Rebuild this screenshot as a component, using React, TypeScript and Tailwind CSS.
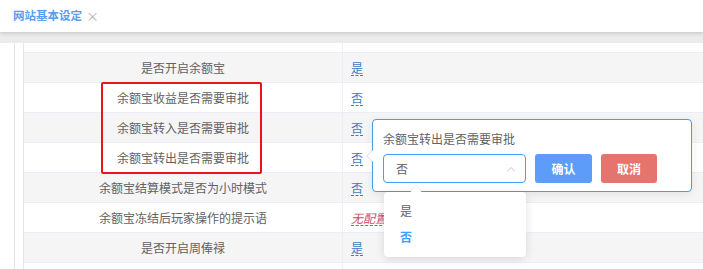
import React from 'react';

const rows: { label: string; value: string; kind: 'link' | 'none' }[] = [
  { label: '是否开启余额宝', value: '是', kind: 'link' },
  { label: '余额宝收益是否需要审批', value: '否', kind: 'link' },
  { label: '余额宝转入是否需要审批', value: '否', kind: 'link' },
  { label: '余额宝转出是否需要审批', value: '否', kind: 'link' },
  { label: '余额宝结算模式是否为小时模式', value: '否', kind: 'link' },
  { label: '余额宝冻结后玩家操作的提示语', value: '无配置', kind: 'none' },
  { label: '是否开启周俸禄', value: '是', kind: 'link' },
  { label: '', value: '', kind: 'link' },
];

export default function App() {
  return (
    <div className="relative h-[269px] w-[703px] overflow-hidden bg-white text-[12px] text-[#606266] [font-family:'Noto_Sans_CJK_SC','Noto_Sans',sans-serif]">
      <div className="relative z-10 flex h-[32px] items-center gap-[4px] bg-white pl-[13px] shadow-[0_1px_4px_rgba(0,0,0,0.18)]">
        <span className="text-[11.5px] font-bold text-[#5b9cf0]">网站基本设定</span>
        <span className="text-[13px] text-[#b4b4b4]">×</span>
      </div>
      <div className="h-[11px] bg-[#ebebeb]" />

      <div className="flex">
        <div className="w-[14px]" />
        <div className="w-[9px] border-l border-[#e6e6e6]" />
        <div className="flex-1 border-l border-[#e6e6e6]">
          <div className="flex h-[9px]">
            <div className="w-[319px] border-r border-[#ebeef5]" />
          </div>
          {rows.map((r, i) => (
            <div key={i} className={`flex h-[30px] border-t border-[#ebeef5] ${i % 2 === 0 ? 'bg-[#f5f5f5]' : 'bg-white'}`}>
              <div className="flex w-[319px] items-center justify-center border-r border-[#ebeef5]">{r.label}</div>
              <div className="flex items-center pl-[8px]">
                {r.value && (
                  <span
                    className={
                      r.kind === 'link'
                        ? 'border-b border-dashed border-[#3f7bc4] leading-[15px] text-[#3f7bc4]'
                        : 'border-b border-dashed border-[#d0486a] leading-[15px] italic text-[#d0486a]'
                    }
                  >
                    {r.value}
                  </span>
                )}
              </div>
            </div>
          ))}
        </div>
      </div>

      {/* highlight box */}
      <div className="absolute left-[101px] top-[82px] h-[92px] w-[161px] rounded-[2px] border-[2.5px] border-[#e8151b]" />

      {/* popover */}
      <div className="absolute left-[372px] top-[119px] h-[73px] w-[320px] rounded-[4px] border border-[#4a9de0] bg-white px-[10px] pt-[10px] shadow-[0_2px_8px_rgba(0,0,0,0.08)]">
        <div className="absolute left-[-5px] top-[32px] h-[8px] w-[8px] rotate-45 border-b border-l border-[#e4e7ed] bg-white" />
        <div className="leading-[18px]">余额宝转出是否需要审批</div>
        <div className="mt-[6px] flex gap-[9px]">
          <div className="flex h-[29px] w-[143px] items-center justify-between rounded-[4px] border border-[#409eff] pl-[12px] pr-[9px]">
            <span className="text-[#606266]">否</span>
            <svg width="10" height="6" viewBox="0 0 10 6" fill="none">
              <path d="M1 5.5L5 1.5L9 5.5" stroke="#c0c4cc" strokeWidth="1" />
            </svg>
          </div>
          <button className="h-[29px] w-[57px] rounded-[3px] bg-[#5d9cf8] font-bold text-white">确认</button>
          <button className="h-[29px] w-[56px] rounded-[3px] bg-[#e5736e] font-bold text-white">取消</button>
        </div>
      </div>

      {/* dropdown */}
      <div className="absolute left-[384px] top-[192px] h-[65px] w-[142px] rounded-[4px] bg-white py-[6px] shadow-[0_2px_10px_rgba(0,0,0,0.12)]">
        <div className="absolute left-[28px] top-[-4px] h-[8px] w-[8px] rotate-45 bg-white shadow-[-1px_-1px_2px_rgba(0,0,0,0.06)]" />
        <div className="relative flex h-[26px] items-center pl-[16px] text-[#606266]">是</div>
        <div className="relative flex h-[26px] items-center pl-[16px] font-bold text-[#409eff]">否</div>
      </div>
    </div>
  );
}
